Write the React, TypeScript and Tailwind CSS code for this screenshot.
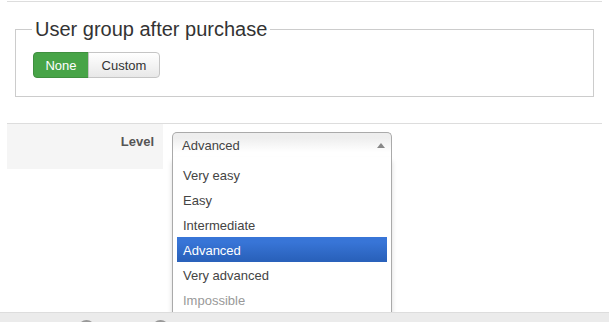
import React from "react";

const levels = ["Very easy", "Easy", "Intermediate", "Advanced", "Very advanced", "Impossible"];

export default function App() {
  return (
    <div className="relative flex h-[322px] w-[609px] flex-col overflow-hidden bg-white font-['Liberation_Sans',Arial,sans-serif] text-[13px] text-[#333]">
      {/* Purchase group */}
      <div className="ml-[7px] mt-px w-[595px] border-t border-[#ddd] px-[8px]">
        <fieldset className="mt-[16px] border border-[#ccc] pb-[18px] pl-[17px] pr-4 pt-[12px]">
          <legend className="-ml-px px-[3px] text-[20px] leading-[22px] text-[#333]">
            User group after purchase
          </legend>
          <div className="flex">
            <button className="h-[26px] w-[56px] rounded-l-[4px] border border-[#3f8f3f] bg-[#47a447] pt-px leading-[24px] text-white">
              None
            </button>
            <button className="-ml-px h-[26px] w-[72px] rounded-r-[4px] border border-[#c5c5c5] bg-gradient-to-b from-white to-[#e8e8e8] pt-px leading-[24px] text-[#333]">
              Custom
            </button>
          </div>
        </fieldset>
      </div>

      {/* Level row */}
      <div className="ml-[7px] mt-[26px] flex w-[595px] border-t border-[#ddd]">
        <div className="h-[45px] w-[156px] bg-[#f5f5f5] pr-[9px] pt-[10px] text-right font-bold leading-4 text-[#555]">
          Level
        </div>
        <div className="relative ml-[9px] mt-[8px] h-[25px] w-[220px]">
          <div className="flex h-[25px] items-center justify-between rounded-t-[5px] border border-b-0 border-[#aaa] bg-gradient-to-b from-[#eee] from-20% to-white to-80% pl-[9px] pr-[6px] pt-[2px] text-[#444]">
            <span>Advanced</span>
            <svg width="8" height="5" viewBox="0 0 8 5" className="-mt-[2px]">
              <path d="M0 5 L4 0 L8 5 Z" fill="#888" />
            </svg>
          </div>
          {/* open list */}
          <ul className="absolute left-0 top-full z-[5] w-full border border-t-0 border-[#aaa] bg-white pb-[4px] pl-[4px] pr-[4px] pt-[5px] shadow-[0_4px_5px_rgba(0,0,0,0.15)]">
            {levels.map((l) => (
              <li
                key={l}
                className={
                  l === "Advanced"
                    ? "bg-gradient-to-b from-[#3875d7] from-20% to-[#2a62bc] to-90% px-[6px] pb-[4px] pt-[6px] leading-[15px] text-white"
                    : l === "Impossible"
                    ? "px-[6px] pb-[4px] pt-[6px] leading-[15px] text-[#999]"
                    : "px-[6px] pb-[4px] pt-[6px] leading-[15px] text-[#444]"
                }
              >
                {l}
              </li>
            ))}
          </ul>
        </div>
      </div>

      {/* Footer bar */}
      <div className="relative z-10 mt-auto flex h-[10px] gap-[57px] border-t border-[#ddd] bg-[#ebebeb] pl-[78px]">
        <div className="mt-[7px] h-[17px] w-[17px] shrink-0 rounded-full bg-[#999]" />
        <div className="mt-[7px] h-[17px] w-[17px] shrink-0 rounded-full bg-[#999]" />
      </div>
    </div>
  );
}
